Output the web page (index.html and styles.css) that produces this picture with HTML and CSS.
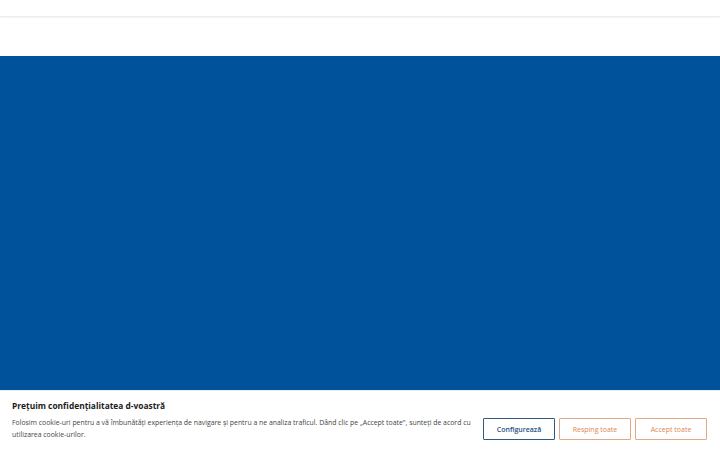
FILE: index.html
```html
<!DOCTYPE html>
<html lang="ro">
<head>
<meta charset="utf-8">
<title>Prețuim confidențialitatea d-voastră</title>
<link rel="stylesheet" href="styles.css">
</head>
<body>
<header class="site-header"></header>
<div class="header-gap"></div>
<section class="hero"></section>

<div class="cookie-banner" role="dialog" aria-label="Cookie">
  <h2 class="cookie-title">Prețuim confidențialitatea d-voastră</h2>
  <div class="cookie-row">
    <p class="cookie-text">Folosim cookie-uri pentru a vă îmbunătăți experiența de navigare și pentru a ne analiza traficul. Dând clic pe „Accept toate", sunteți de acord cu utilizarea cookie-urilor.</p>
    <div class="cookie-actions">
      <button class="btn btn-config">Configurează</button>
      <button class="btn btn-orange">Resping toate</button>
      <button class="btn btn-orange">Accept toate</button>
    </div>
  </div>
</div>
</body>
</html>
```

FILE: styles.css
```css
* { box-sizing: border-box; }

html, body {
  margin: 0;
  padding: 0;
  background: #ffffff;
  font-family: "Open Sans", "Noto Sans", sans-serif;
  overflow: hidden;
}

.site-header {
  height: 17px;
  background: #ffffff;
  border-bottom: 1px solid #ececec;
  box-shadow: 0 1px 2px rgba(0, 0, 0, 0.05);
}

.header-gap {
  height: 39px;
}

.hero {
  height: 394px;
  background: #00529b;
}

.cookie-banner {
  position: fixed;
  left: 0;
  right: 0;
  bottom: 0;
  height: 60px;
  background: #ffffff;
  border-top: 1px solid #e6eef5;
  padding: 9px 13px 0 12px;
}

.cookie-title {
  margin: 0;
  font-size: 8.4px;
  line-height: 12px;
  font-weight: 700;
  color: #1c1c1c;
}

.cookie-row {
  display: flex;
  align-items: center;
  gap: 5px;
  margin-top: 5px;
}

.cookie-text {
  margin: 0;
  flex: 1;
  font-size: 6.9px;
  line-height: 12px;
  color: #444444;
}

.cookie-actions {
  display: flex;
  gap: 4px;
}

.btn {
  width: 72px;
  height: 22px;
  background: #ffffff;
  font-family: inherit;
  font-size: 7px;
  border-radius: 1px;
  padding: 0;
  cursor: pointer;
}

.btn-config {
  border: 1.5px solid #2f5a82;
  color: #1d4f84;
  font-weight: 600;
}

.btn-orange {
  border: 1.5px solid #e2a888;
  color: #dd8551;
}
```
